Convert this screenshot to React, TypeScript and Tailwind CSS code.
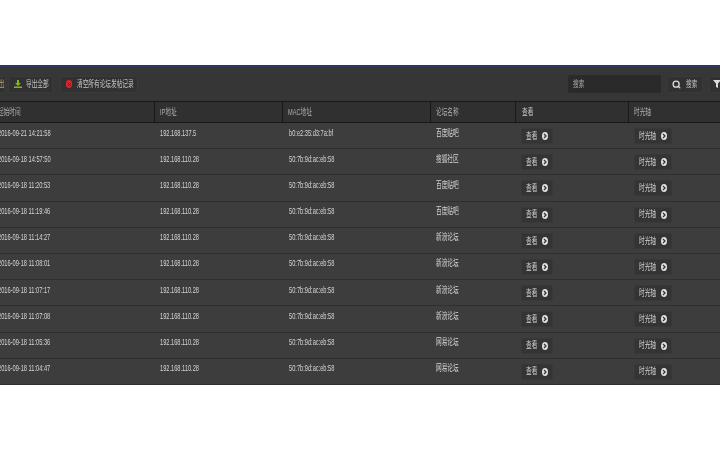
import { Search, X } from 'lucide-react';

const rows = [
  ['2016-09-21 14:21:58', '192.168.137.5', 'b0:e2:35:d3:7a:bf', '百度贴吧'],
  ['2016-09-18 14:57:50', '192.168.110.28', '50:7b:9d:ac:eb:58', '搜狐社区'],
  ['2016-09-18 11:20:53', '192.168.110.28', '50:7b:9d:ac:eb:58', '百度贴吧'],
  ['2016-09-18 11:19:46', '192.168.110.28', '50:7b:9d:ac:eb:58', '百度贴吧'],
  ['2016-09-18 11:14:27', '192.168.110.28', '50:7b:9d:ac:eb:58', '新浪论坛'],
  ['2016-09-18 11:08:01', '192.168.110.28', '50:7b:9d:ac:eb:58', '新浪论坛'],
  ['2016-09-18 11:07:17', '192.168.110.28', '50:7b:9d:ac:eb:58', '新浪论坛'],
  ['2016-09-18 11:07:08', '192.168.110.28', '50:7b:9d:ac:eb:58', '新浪论坛'],
  ['2016-09-18 11:05:36', '192.168.110.28', '50:7b:9d:ac:eb:58', '网易论坛'],
  ['2016-09-18 11:04:47', '192.168.110.28', '50:7b:9d:ac:eb:58', '网易论坛'],
];

const headers = ['起始时间', 'IP地址', 'MAC地址', '论坛名称', '查看', '时光轴'];

// the source is a squashed screenshot, so all text is narrowed the same way
function Narrow({ children }: { children: React.ReactNode }) {
  return <span className="block origin-left scale-x-[0.63] whitespace-nowrap">{children}</span>;
}

function RowButton({ label, width }: { label: string; width: string }) {
  return (
    <div className={`flex h-[16px] items-center justify-between rounded-[2px] border border-[#383838] bg-[#343434] pl-[4px] pr-[4px] pt-[1px] text-[9px] text-[#cfcfcf] ${width}`}>
      <div className="w-0">
        <Narrow>{label}</Narrow>
      </div>
      <svg width="6" height="8" viewBox="0 0 6 8" className="-mt-[1px]">
        <ellipse cx="3" cy="4" rx="3" ry="4" fill="#e2e2e2" />
        <path d="M2 2l2 2-2 2" fill="none" stroke="#333" strokeWidth="1.3" />
      </svg>
    </div>
  );
}

export default function App() {
  return (
    <div className="h-[450px] w-[720px] overflow-hidden bg-white font-['Liberation_Sans','Noto_Sans_CJK_SC',sans-serif]">
      <div className="h-[65px]" />
      <div className="blur-[0.3px]">
        <div className="h-[2px] bg-[#2b3a5c]" />
        <div className="flex h-[34px] items-center justify-between bg-[#363636] text-[9px] text-[#c4c4c4]">
          <div className="flex items-center">
            <div className="-ml-[14px] flex h-[17px] w-[20px] items-center rounded-[2px] border border-[#3a3a3a] bg-[#313131] pl-[12px] pt-[2px] text-[#b5a070]">
              <div className="w-[5px]">
                <Narrow>出</Narrow>
              </div>
            </div>
            <div className="ml-[2px] flex h-[17px] w-[45px] items-center rounded-[2px] border border-[#3a3a3a] bg-[#313131] pt-[2px]">
              <svg width="8" height="8" viewBox="0 0 8 8" fill="#7fb81c" className="-mt-[2px] ml-[5px]">
                <path d="M3 0h2v3h2L4 6 1 3h2zM0 6.5h8V8H0z" />
              </svg>
              <div className="ml-[4px] w-[22px]">
                <Narrow>导出全部</Narrow>
              </div>
            </div>
            <div className="ml-[7px] flex h-[17px] w-[78px] items-center rounded-[2px] border border-[#3a3a3a] bg-[#313131] pt-[2px]">
              <span className="-mt-[2px] ml-[5px] flex h-[8px] w-[6px] items-center justify-center rounded-full bg-[#d8262c]">
                <X size={5} strokeWidth={4} className="text-[#7a1216]" />
              </span>
              <div className="ml-[5px] w-[56px]">
                <Narrow>清空所有论坛发帖记录</Narrow>
              </div>
            </div>
          </div>
          <div className="flex items-center">
            <div className="flex h-[18px] w-[93px] items-center rounded-[2px] bg-[#2a2a2a] pl-[5px] pt-[1px] text-[#ababab]">
              <Narrow>搜索</Narrow>
            </div>
            <div className="ml-[6px] flex h-[17px] w-[36px] items-center rounded-[2px] border border-[#3a3a3a] bg-[#313131] pt-[2px]">
              <Search size={9} strokeWidth={3.5} className="-mt-[2px] ml-[4px] text-[#dcdcdc]" />
              <div className="ml-[5px] w-[11px]">
                <Narrow>搜索</Narrow>
              </div>
            </div>
            <div className="-mr-[10px] ml-[6px] flex h-[17px] w-[21px] items-center rounded-[2px] border border-[#3a3a3a] bg-[#313131] pl-[3px]">
              <svg width="8" height="8" viewBox="0 0 8 8" fill="#dcdcdc">
                <path d="M0 0h8L5 3.5V8L3 7V3.5z" />
              </svg>
            </div>
          </div>
        </div>
        <div className="-ml-[10px] w-[730px]">
          <div className="grid h-[22px] grid-cols-[165px_128px_148px_85px_113px_91px] border-y border-[#181818] bg-[#303030] text-[9px] text-[#aeaeae]">
            {headers.map((h, i) => (
              <div
                key={h}
                className={`flex items-center pt-[1px] ${i === 0 ? 'pl-[8px]' : i === 4 ? 'pl-[6px] text-[#c8c8c8]' : 'pl-[5px]'} ${i < 5 ? 'border-r border-[#181818]' : ''}`}
              >
                <Narrow>{h}</Narrow>
              </div>
            ))}
          </div>
          {rows.map((r, i) => (
            <div
              key={i}
              className="grid h-[26.2px] grid-cols-[165px_128px_148px_85px_113px_91px] border-b border-[#2f2f2f] bg-[#3d3d3d] text-[9px] text-[#d6d6d6]"
            >
              <div className="pl-[8px] pt-[3.5px]">
                <Narrow>{r[0]}</Narrow>
              </div>
              <div className="pl-[5px] pt-[3.5px]">
                <Narrow>{r[1]}</Narrow>
              </div>
              <div className="pl-[6px] pt-[3.5px]">
                <Narrow>{r[2]}</Narrow>
              </div>
              <div className="pl-[5px] pt-[3.5px]">
                <Narrow>{r[3]}</Narrow>
              </div>
              <div className="pl-[5px] pt-[5px]">
                <RowButton label="查看" width="w-[32px]" />
              </div>
              <div className="pl-[5px] pt-[5px]">
                <RowButton label="时光轴" width="w-[38px]" />
              </div>
            </div>
          ))}
        </div>
      </div>
    </div>
  );
}
